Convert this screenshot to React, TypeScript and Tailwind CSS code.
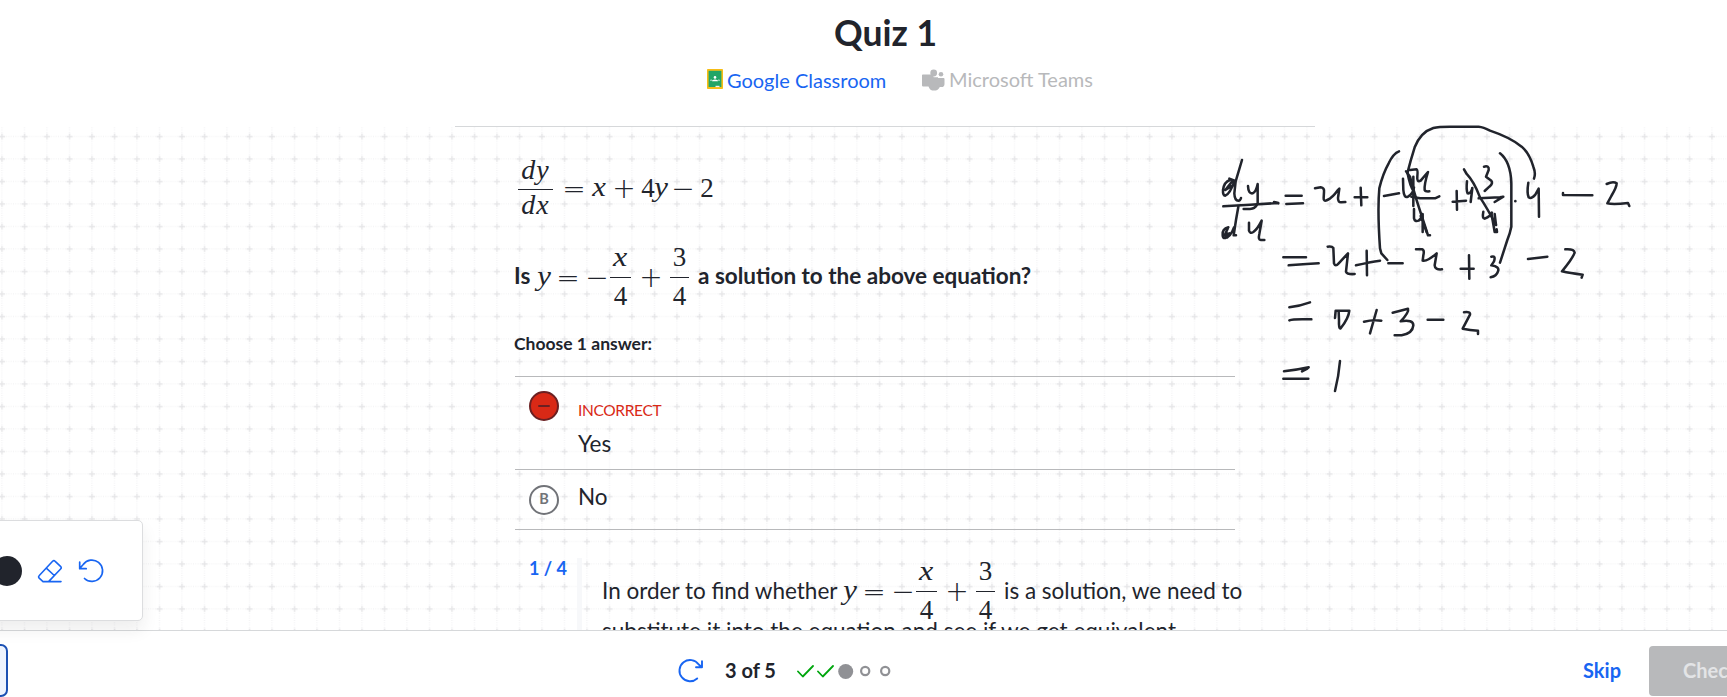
import type { ReactNode } from "react";

function Op({ children, className = "" }: { children: ReactNode; className?: string }) {
  return (
    <span className={`flex w-[22px] shrink-0 justify-center font-['DejaVu_Sans',sans-serif] text-[28px] leading-[30px] font-extralight ${className}`}>
      {children}
    </span>
  );
}

function Var({ children, className = "" }: { children: ReactNode; className?: string }) {
  return (
    <span className={`w-[14px] shrink-0 scale-x-110 pb-[4px] text-center font-['Liberation_Serif',serif] text-[28px] leading-[30px] font-normal italic ${className}`}>
      {children}
    </span>
  );
}

function Num({ children, className = "" }: { children: ReactNode; className?: string }) {
  return (
    <span className={`w-[14px] shrink-0 pb-[3px] text-center font-['Liberation_Serif',serif] text-[27px] leading-[30px] font-normal ${className}`}>
      {children}
    </span>
  );
}

function Frac({ top, bottom, italicTop = false, className = "" }: { top: string; bottom: string; italicTop?: boolean; className?: string }) {
  return (
    <span className={`flex shrink-0 flex-col items-center pb-[2px] font-['Liberation_Serif',serif] text-[27px] leading-[20px] font-normal ${className}`}>
      <span className={italicTop ? "scale-x-115 text-[28px] italic" : ""}>{top}</span>
      <span className="mt-[10px] h-px w-full bg-[#21242c]" />
      <span className="mt-[8px]">{bottom}</span>
    </span>
  );
}

function Candidate() {
  return (
    <span className="flex shrink-0 items-center">
      <Var>y</Var>
      <Op className="ml-[6px]">=</Op>
      <Op className="ml-[7px]">−</Op>
      <Frac top="x" bottom="4" italicTop className="ml-[2px] w-[21px]" />
      <Op className="ml-[9px]">+</Op>
      <Frac top="3" bottom="4" className="ml-[8px] w-[19px]" />
    </span>
  );
}

function Header() {
  return (
    <header className="flex h-[126px] shrink-0 flex-col items-center pl-[41px]">
      <h1 className="mt-[11px] pl-[3px] text-[35.500px] leading-[44px] font-bold">Quiz 1</h1>
      <div className="mt-[12px] flex h-[26px] items-center pl-[32px] text-[20.25px]">
        <svg width="16" height="20" viewBox="0 0 16 20" className="mb-[2px]">
          <rect width="16" height="20" rx="0.8" fill="#f6bd16" />
          <rect x="1.6" y="1.8" width="12.8" height="16.2" fill="#23a566" />
          <circle cx="8" cy="8.4" r="1.3" fill="#fff" />
          <path d="M5 12.3q0-1.8 3-1.8t3 1.8z" fill="#fff" />
          <path d="M3 12v-1.300l2-.4v1.700zM13 12v-1.300l-2-.4v1.700z" fill="#8ad0ae" />
          <rect x="8.500" y="16.800" width="4" height="1.300" fill="#f1f1f1" />
        </svg>
        <span className="ml-[4px] w-[159px] text-[20px] whitespace-nowrap text-[#1865f2]">Google Classroom</span>
        <svg width="23" height="22" viewBox="0 0 23 22" className="ml-[36px]" fill="#b8b9bb">
          <circle cx="11.700" cy="4" r="3.400" />
          <circle cx="19" cy="5.200" r="2.300" />
          <path d="M.8 5.500h9.700l1.200 2.800h4.300v.7h5.600q.9 0 .9.900v5q0 3-3 3.200l-1.700-.2q-1.500 3.700-5.800 3.700-4.200 0-5.500-4.200H.8q-.8 0-.8-.8V6.300q0-.8.800-.8z" />
        </svg>
        <span className="ml-[4px] w-[144px] pb-[2px] text-[20px] whitespace-nowrap text-[#b8b9bb]">Microsoft Teams</span>
      </div>
    </header>
  );
}

function GridPaper() {
  return (
    <svg className="absolute inset-0 h-full w-full" aria-hidden="true">
      <defs>
        <pattern id="paper" width="22.5" height="22.5" patternUnits="userSpaceOnUse" x="-9.5" y="-1">
          <path d="M0 11.5H22.500M11.500 0V22.500" stroke="#f0f0f1" strokeWidth="1" strokeDasharray="1 1.250" />
          <path d="M8.500 11.500H14.500M11.500 8.500V14.500" stroke="#e6e6e8" strokeWidth="1.400" />
        </pattern>
      </defs>
      <rect width="100%" height="100%" fill="url(#paper)" />
    </svg>
  );
}

function Exercise() {
  return (
    <div className="relative ml-[515px] w-[720px]">
      <div className="mt-[31px] flex h-[61px] items-center pt-px">
        <span className="ml-[3px] flex w-[35px] shrink-0 flex-col items-center font-['Liberation_Serif',serif] text-[28px] leading-[20px] tracking-[1px] italic">
          <span>dy</span>
          <span className="mt-[9px] h-px w-full bg-[#21242c]" />
          <span className="mt-[5px] mb-[4px]">dx</span>
        </span>
        <Op className="ml-[10px]">=</Op>
        <Var className="ml-[7px]">x</Var>
        <Op className="ml-[7px]">+</Op>
        <Num className="ml-[6px]">4</Num>
        <Var className="-ml-px">y</Var>
        <Op className="ml-[4px]">−</Op>
        <Num className="ml-[6px]">2</Num>
      </div>

      <div className="mt-[28px] flex h-[61px] items-center text-[22.5px] leading-[30px] font-bold">
        <span className="-ml-px w-[23px] shrink-0 pb-[3px]">Is</span>
        <Candidate />
        <span className="ml-[9px] pb-[3px] whitespace-nowrap">a solution to the above equation?</span>
      </div>

      <p className="mt-[24px] -ml-px text-[17.500px] leading-[23px] font-bold">Choose 1 answer:</p>

      <ul className="mt-[21px] border-t border-[#b8b9bb]">
        <li className="flex h-[93px] border-b border-[#b8b9bb]">
          <span className="mt-[14px] ml-[14px] flex h-[30px] w-[30px] items-center justify-center rounded-full border-2 border-[#6b2022] bg-[#d92916]">
            <span className="h-[2px] w-[12px] rounded bg-[#6b2022]" />
          </span>
          <span className="ml-[19px] flex flex-col">
            <span className="mt-[23px] text-[15.500px] leading-[20px] tracking-[-0.35px] text-[#d92916]">INCORRECT</span>
            <span className="mt-[10px] text-[22.5px] leading-[28px]">Yes</span>
          </span>
        </li>
        <li className="flex h-[60px] border-b border-[#b8b9bb]">
          <span className="mt-[15px] ml-[14px] flex h-[30px] w-[30px] items-center justify-center rounded-full border-2 border-[#717378] text-[14.5px] font-bold text-[#717378]">
            <span className="pb-[2px]">B</span>
          </span>
          <span className="mt-[13px] ml-[19px] text-[22.5px] leading-[28px]">No</span>
        </li>
      </ul>

      <div className="mt-[28px] flex h-[110px]">
        <span className="ml-[14px] w-[48px] shrink-0 text-[18px] leading-[21px] font-bold text-[#1865f2]">1 / 4</span>
        <span className="w-[5px] shrink-0 bg-[#f7f8fa]" />
        <div className="ml-[20px] shrink-0 text-[22.5px] leading-[30px] whitespace-nowrap">
          <div className="mt-[3px] flex h-[61px] items-center">
            <span className="w-[241px] shrink-0 pb-[2px]">In order to find whether</span>
            <Candidate />
            <span className="ml-[9px] pb-[2px]">is a solution, we need to</span>
          </div>
          <div className="-mt-[6px]">substitute it into the equation and see if we get equivalent</div>
        </div>
      </div>
    </div>
  );
}

function Footer() {
  return (
    <footer className="flex h-[67px] shrink-0 border-t border-[#d6d8da] bg-white text-[20px] font-bold">
      <span className="mt-[13px] -ml-[60px] h-[53px] w-[68px] shrink-0 rounded-[7px] border-2 border-[#1b50b3] bg-[#edf3fe]" />
      <div className="ml-[670px] flex h-[80px] items-center">
        <svg width="26" height="26" viewBox="0 0 26 26" fill="none" stroke="#1865f2" strokeWidth="1.900" strokeLinecap="round" strokeLinejoin="round">
          <path d="M19.200 20.500A10.600 10.600 0 1 1 20.700 6.500L24 9.200M24 3.200V9.200H18" />
        </svg>
        <span className="ml-[21px] w-[72px] pb-[3px] whitespace-nowrap">3 of 5</span>
        <svg width="98" height="18" viewBox="0 0 98 18" fill="none">
          <path d="M1 9.500L5.800 14.500L16 4M21 9.500L25.800 14.500L36 4" stroke="#00a60e" strokeWidth="1.800" strokeLinecap="round" strokeLinejoin="round" />
          <circle cx="48.700" cy="9.500" r="7.500" fill="#909195" />
          <circle cx="68.200" cy="9" r="4.100" stroke="#909195" strokeWidth="2.200" />
          <circle cx="88.200" cy="9" r="4.100" stroke="#909195" strokeWidth="2.200" />
        </svg>
      </div>
      <div className="ml-auto flex h-[80px] shrink-0 items-center pb-[3px] text-[#1865f2]">Skip</div>
      <div className="mt-[15px] -mr-[34px] ml-[28px] flex h-[50px] w-[112px] shrink-0 items-center rounded-[4px] bg-[#b8b9bb] pb-[2px] pl-[34px] text-[#e3e4e6]">
        Check
      </div>
    </footer>
  );
}

function Toolbar() {
  return (
    <div className="absolute top-[520px] -left-[20px] flex h-[101px] w-[163px] items-center rounded-[5px] border border-[#dcdddf] bg-white shadow-[0_9px_16px_rgba(33,36,44,0.08)]">
      <span className="ml-[11px] h-[30px] w-[30px] rounded-full bg-[#21242c]" />
      <svg className="ml-[15px]" width="26" height="26" viewBox="0 0 26 26" fill="none" stroke="#1865f2" strokeWidth="1.600" strokeLinecap="round" strokeLinejoin="round">
        <path d="M24 23.600H6L2.200 20.200Q1 18.800 2.300 17.500L15.600 3.300Q16.900 2 18.200 3.300L23.500 8.300Q24.900 9.700 23.600 11L11.800 23.400M9.300 10.200L17.300 17.500" />
      </svg>
      <svg className="ml-[14px]" width="27" height="26" viewBox="0 0 27 26" fill="none" stroke="#1865f2" strokeWidth="1.700" strokeLinecap="round" strokeLinejoin="round">
        <path d="M7.500 20.500A10.700 10.700 0 1 0 6.200 6.500L2.700 10.500M2.700 4.200V10.700H9.200" />
      </svg>
    </div>
  );
}

function Handwriting() {
  return (
    <svg className="pointer-events-none absolute inset-0" width="1727" height="697" fill="none" stroke="#21242c" strokeWidth="7.600" strokeLinecap="round" strokeLinejoin="round">
      <g transform="translate(1200 110) scale(.33333)">
        <path d="M126 150L107 214L103 250Q104 272 115 272Q121 272 123 264M90 210Q72 216 69 240Q68 256 76 257Q90 252 104 212L88 206M98 212L76 240L100 225" />
        <path d="M144 228Q145 252 158 250Q168 246 173 222L173 280Q166 297 150 297L131 297" />
        <path d="M70 289L150 284L235 279M222 276L235 280" />
        <path d="M115 290L108 330L101 376L108 376M85 352Q66 356 68 376Q68 385 76 384Q92 380 102 352M84 354L74 376L88 370L82 382M80 362L78 380" />
        <path d="M147 338L147 362Q150 372 160 366Q172 358 185 332L178 372Q174 390 182 390L193 390" />
        <path d="M257 257H305M259 282L309 280" />
        <path d="M345 235L362 232Q374 234 372 246L371 264Q370 276 382 270Q398 262 412 242L418 236L414 264Q414 278 424 277L436 276" />
        <path d="M464 262H502M482 233L484 286" />
        <path d="M597 124Q580 130 566 160Q548 192 538 235Q532 300 540 415L544 430L562 450M552 258L597 250" />
      </g>
      <g transform="translate(1400 110) scale(.33333)">
        <path d="M22 190Q32 150 44 112Q62 66 100 54Q115 50 150 50L236 50Q250 51 270 62Q330 82 365 110Q388 130 400 170Q408 190 402 206" />
        <path d="M9 206L10 240Q12 266 24 260Q40 250 42 232M40 200V288" />
        <path d="M18 184L30 200Q40 240 56 290L74 345L84 376L90 376M22 186Q30 230 42 245" />
        <path d="M30 180L50 178Q54 180 52 200Q50 218 62 212L84 186Q72 225 74 240Q76 245 88 244" />
        <path d="M34 260L60 265L105 265L118 259M42 297V325Q44 336 56 332Q66 326 68 312V366M62 318L80 366" />
        <path d="M158 275L198 272M170 243L171 299" />
        <path d="M201 214Q198 240 203 250Q212 252 217 234L212 276" />
        <path d="M192 178L200 192Q222 215 240 262Q262 295 288 345" />
        <path d="M252 170Q268 166 266 180L258 200L274 212Q280 220 268 230L254 243M236 265L300 262L310 260L284 276" />
        <path d="M250 305Q246 326 254 326Q272 318 276 308M274 308L284 366L291 366L290 358M284 312L288 345" />
        <path d="M300 130Q332 155 334 220V350Q330 370 322 390L300 458" />
        <path d="M346 273V273.500" />
        <path d="M385 218Q380 250 386 262Q394 268 406 254L416 236L417 320M489 249L489 255L577 256" />
        <path d="M620 222Q640 212 650 220Q650 232 634 258L622 280Q640 284 684 279L688 288" />
      </g>
      <g transform="translate(1270 240) scale(.33333)">
        <path d="M40 52H108M56 76L110 72L146 70" />
        <path d="M173 20Q186 18 190 24L192 70Q196 82 206 70L234 40L228 95Q232 104 254 102" />
        <path d="M258 76Q300 66 330 62M290 32L291 106M355 70H398" />
        <path d="M438 28L456 28Q464 30 460 46L458 62Q470 66 500 40L494 76Q494 90 516 88" />
        <path d="M572 86H611M597 46L598 116" />
        <path d="M664 50Q678 46 672 64L664 76Q690 80 684 94Q680 108 662 112M774 57L832 50" />
        <path d="M886 28Q912 26 914 38Q908 55 876 94Q900 100 938 104L935 113" />
        <path d="M58 202Q90 198 120 187M58 241Q70 236 124 238" />
        <path d="M195 234L197 212H238Q236 235 212 265Q206 268 207 240L206 214" />
        <path d="M282 245Q310 238 334 242M320 210L300 280" />
        <path d="M368 218L414 206Q418 216 392 244Q430 238 430 256Q428 280 395 286L374 286M473 239H520" />
        <path d="M582 217Q602 214 600 224L578 266Q600 270 624 272V282" />
        <path d="M42 394Q80 390 116 382L96 394L112 386M40 416H115M210 363Q206 410 195 453" />
      </g>
    </svg>
  );
}

export default function App() {
  return (
    <div className="relative flex h-[697px] w-[1727px] flex-col overflow-hidden bg-white font-[Lato,sans-serif] text-[#21242c]">
      <Header />
      <main className="relative min-h-0 flex-1 overflow-hidden">
        <GridPaper />
        <div className="relative ml-[455px] h-px w-[860px] bg-[#d6d8da]" />
        <Exercise />
      </main>
      <Footer />
      <Handwriting />
      <Toolbar />
    </div>
  );
}
